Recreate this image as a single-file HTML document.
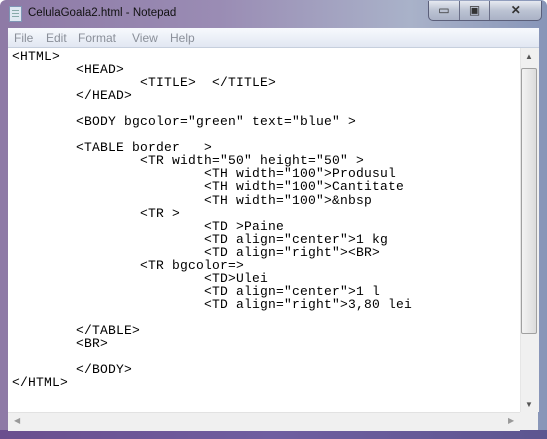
<!DOCTYPE html>
<html><head><style>
body{margin:0;width:547px;height:439px;overflow:hidden;font-family:"Liberation Sans",sans-serif;}
.win{position:absolute;left:0;top:0;width:547px;height:439px;background:linear-gradient(90deg,#8e7aa6 0%,#9a8cb4 40%,#a9b2c9 75%,#8795b8 100%);border-radius:6px 6px 0 0;}
.bot{position:absolute;left:0;top:430px;width:547px;height:9px;background:linear-gradient(90deg,#6a4f8e,#6f5ea0 50%,#5d5690);}
.title{position:absolute;left:28px;top:7px;font-size:11.5px;color:#111;}
.icon{position:absolute;left:9px;top:6px;width:11px;height:14px;background:#dfe8f2;border:1px solid #7f95b5;}
.icon:after{content:"";position:absolute;left:2px;top:3px;width:7px;height:8px;background:repeating-linear-gradient(#8aa 0 1px,transparent 1px 3px);}
.btns{position:absolute;left:428px;top:1px;width:112px;height:19px;border:1px solid #5b5f7a;border-top:none;border-radius:0 0 5px 5px;background:linear-gradient(#e6e9f0,#bcc3d3 50%,#aab2c6);display:flex;}
.btns div{flex:1;border-right:1px solid #6a6f88;text-align:center;font-size:12px;line-height:18px;color:#333;}
.btns div:last-child{flex:1.7;border:none;}
.menu{position:absolute;left:8px;top:28px;width:531px;height:19px;background:linear-gradient(#f7f9fd,#e1e7f2);border-bottom:1px solid #c6cfdd;font-size:12px;color:#8a8f99;}
.menu span{position:absolute;top:3px;}
.edit{position:absolute;left:8px;top:48px;width:512px;height:364px;background:#fff;}
pre{margin:0;position:absolute;left:4px;top:2px;font-family:"Liberation Mono",monospace;font-size:13px;line-height:13.04px;letter-spacing:0.2px;color:#000;}
.vs{position:absolute;left:520px;top:48px;width:18px;height:364px;background:#f0f0f0;border-left:1px solid #e6e6e6;}
.thumb{position:absolute;left:521px;top:68px;width:14px;height:264px;border:1px solid #a0a0a0;border-radius:2px;background:linear-gradient(90deg,#f3f3f3,#dcdcdc);}
.hs{position:absolute;left:8px;top:412px;width:512px;height:18px;background:#f0f0f0;border-top:1px solid #e2e2e2;}
.corner{position:absolute;left:520px;top:412px;width:18px;height:18px;background:#f0f0f0;}
.arr{position:absolute;font-size:8px;color:#555;}
</style></head><body>
<div class="win"></div>
<div class="bot"></div>
<div class="icon"></div>
<div class="title">CelulaGoala2.html - Notepad</div>
<div class="btns"><div>▭</div><div>▣</div><div style="font-weight:bold">✕</div></div>
<div class="menu"><span style="left:6px">File</span><span style="left:38px">Edit</span><span style="left:70px">Format</span><span style="left:124px">View</span><span style="left:162px">Help</span></div>
<div class="edit"><pre>&lt;HTML&gt;
        &lt;HEAD&gt;
                &lt;TITLE&gt;  &lt;/TITLE&gt;
        &lt;/HEAD&gt;

        &lt;BODY bgcolor="green" text="blue" &gt;

        &lt;TABLE border   &gt;
                &lt;TR width="50" height="50" &gt;
                        &lt;TH width="100"&gt;Produsul
                        &lt;TH width="100"&gt;Cantitate
                        &lt;TH width="100"&gt;&amp;nbsp
                &lt;TR &gt;
                        &lt;TD &gt;Paine
                        &lt;TD align="center"&gt;1 kg
                        &lt;TD align="right"&gt;&lt;BR&gt;
                &lt;TR bgcolor=&gt;
                        &lt;TD&gt;Ulei
                        &lt;TD align="center"&gt;1 l
                        &lt;TD align="right"&gt;3,80 lei

        &lt;/TABLE&gt;
        &lt;BR&gt;

        &lt;/BODY&gt;
&lt;/HTML&gt;</pre></div>
<div class="vs"></div>
<div class="thumb"></div>
<div class="arr" style="left:525px;top:52px">▲</div>
<div class="arr" style="left:525px;top:400px">▼</div>
<div class="hs"></div>
<div class="corner"></div>
<div class="arr" style="left:14px;top:416px;color:#999">◀</div>
<div class="arr" style="left:508px;top:416px;color:#999">▶</div>
</body></html>
